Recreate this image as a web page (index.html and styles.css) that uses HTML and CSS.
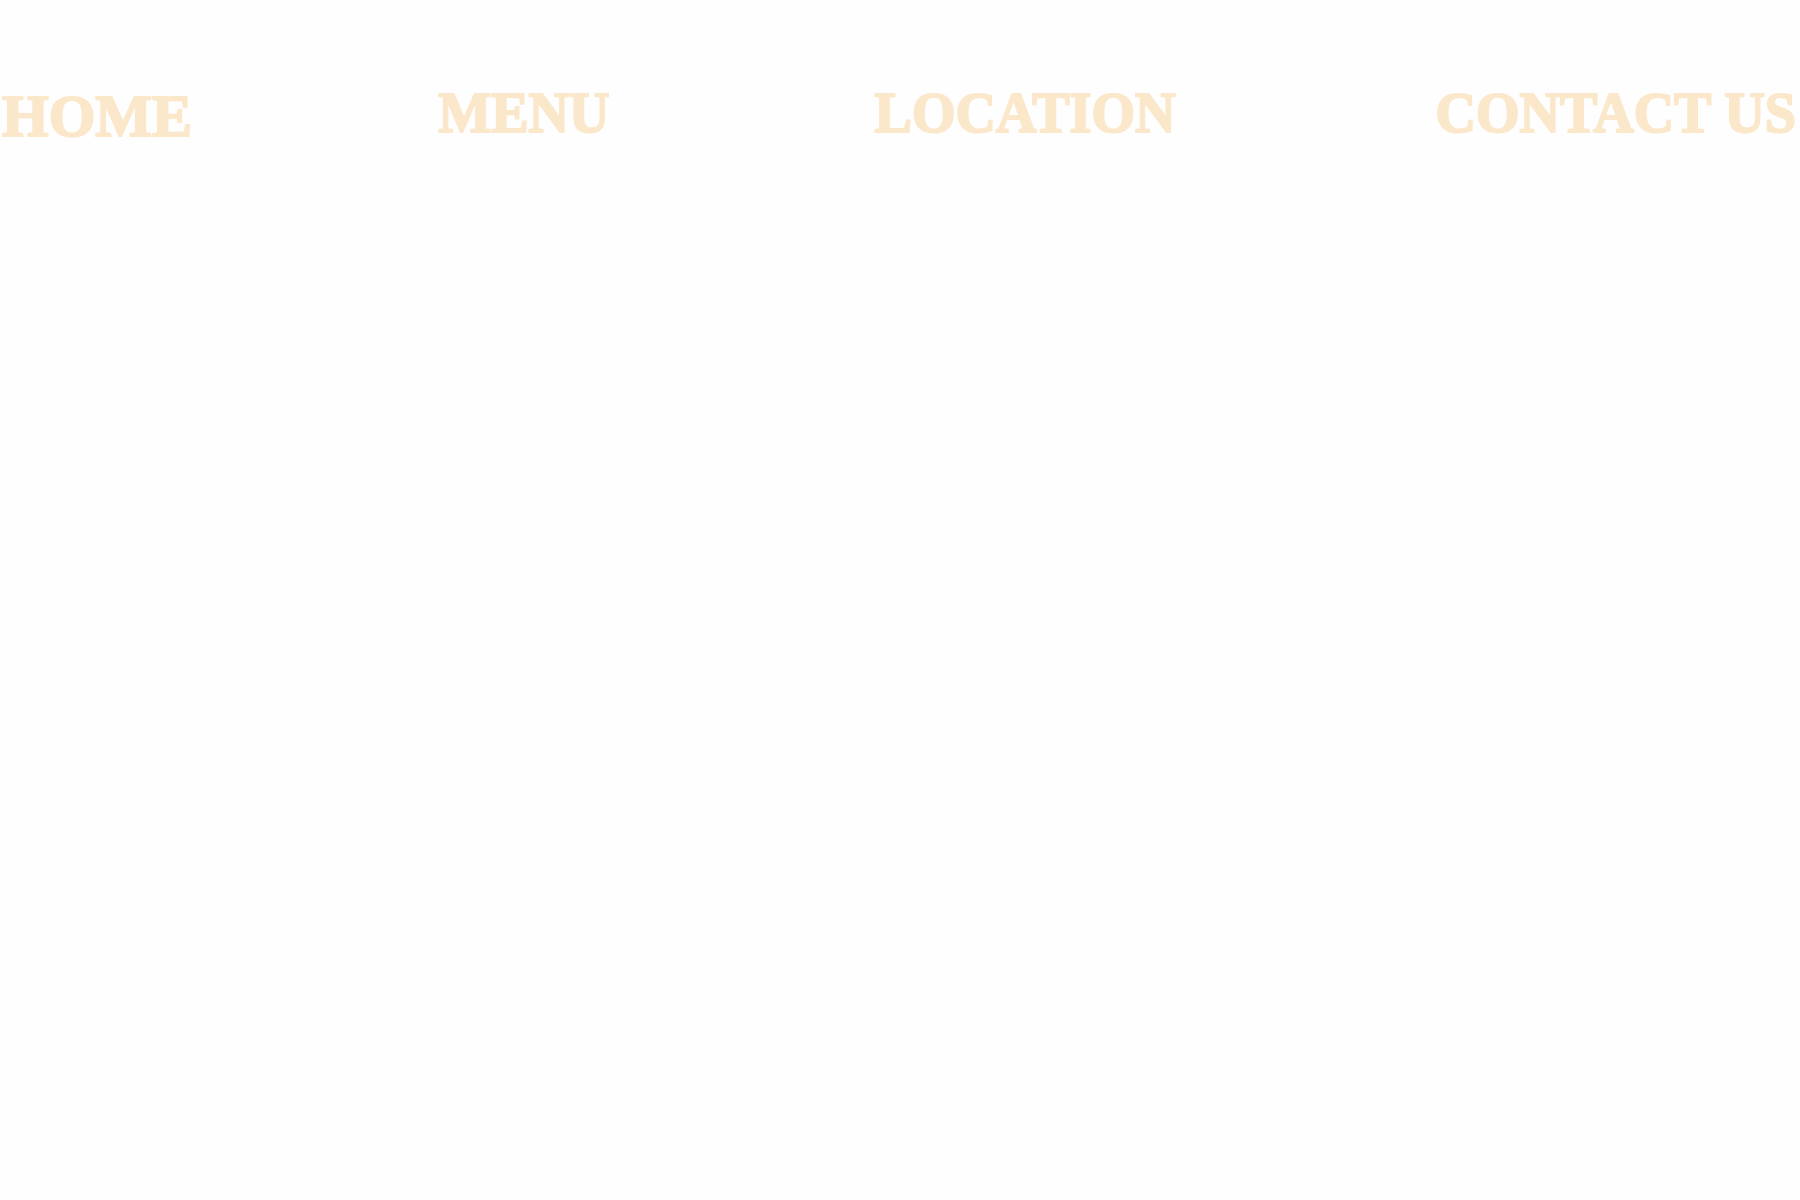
FILE: index.html
```html
<!DOCTYPE html>
<html lang="en">
<head>
<meta charset="utf-8">
<title>Home</title>
<link rel="stylesheet" href="styles.css">
</head>
<body>
<nav class="nav" aria-label="Main">
  <a class="nav-link nav-link-current" href="#home" aria-current="page">HOME</a>
  <a class="nav-link" href="#menu">MENU</a>
  <a class="nav-link" href="#location">LOCATION</a>
  <a class="nav-link" href="#contact">CONTACT US</a>
</nav>
</body>
</html>
```
FILE: styles.css
```css
body {
  margin: 0;
  background: #fefefe;
  font-family: "Liberation Serif", "Times New Roman", serif;
}

.nav {
  display: grid;
  grid-template-columns: 7fr 7fr 9fr auto;
  align-items: start;
  padding: 80px 4px 80px 2px;
}

.nav-link {
  color: #fbe7ca;
  font-size: 56px;
  font-weight: 700;
  line-height: 66px;
  text-decoration: none;
  white-space: nowrap;
  -webkit-text-stroke: 2px #fbe7ca;
}

.nav-link-current {
  font-size: 60px;
  line-height: 72px;
}
```
